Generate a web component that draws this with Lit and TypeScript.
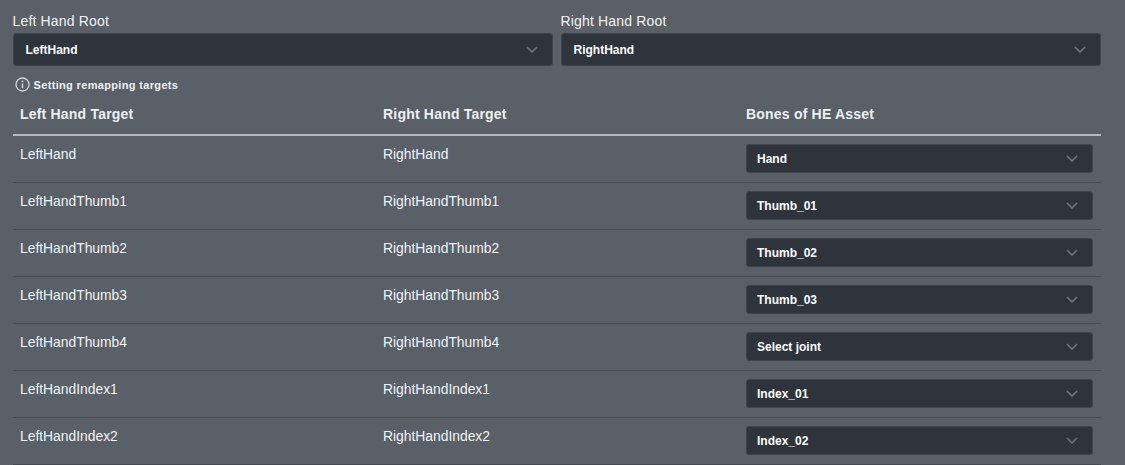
import { LitElement, html, css, svg } from "lit";
import { customElement } from "lit/decorators.js";

const rows: [string, string, string][] = [
  ["LeftHand", "RightHand", "Hand"],
  ["LeftHandThumb1", "RightHandThumb1", "Thumb_01"],
  ["LeftHandThumb2", "RightHandThumb2", "Thumb_02"],
  ["LeftHandThumb3", "RightHandThumb3", "Thumb_03"],
  ["LeftHandThumb4", "RightHandThumb4", "Select joint"],
  ["LeftHandIndex1", "RightHandIndex1", "Index_01"],
  ["LeftHandIndex2", "RightHandIndex2", "Index_02"],
];

const chevron = svg`<path d="M1 1 L6 6 L11 1" fill="none" stroke="#717982" stroke-width="1.5"/>`;

@customElement("app-root")
export class AppRoot extends LitElement {
  static styles = css`
    :host {
      display: block;
      width: 1125px;
      height: 465px;
      overflow: hidden;
      background: #596068;
      color: #fff;
      font-family: "Liberation Sans", Arial, sans-serif;
      box-sizing: border-box;
      padding: 12px 24px 0 12.5px;
    }
    .roots {
      display: grid;
      grid-template-columns: 540px 540px;
      gap: 8px;
    }
    .root-label {
      font-size: 14px;
      line-height: 18px;
      letter-spacing: 0.17px;
      color: #f2f4f5;
      height: 21px;
    }
    .select {
      display: flex;
      align-items: center;
      justify-content: space-between;
      box-sizing: border-box;
      background: #2d343c;
      border: 1px solid #3d444c;
      border-radius: 3px;
      font-size: 12px;
      font-weight: 700;
      color: #fff;
    }
    .select.big {
      height: 33px;
      padding: 0 14px 0 12px;
    }
    .select.small {
      height: 29px;
      width: 347px;
      padding: 0 14px 0 10px;
    }
    .select svg {
      width: 12px;
      height: 7px;
      display: block;
    }
    .hint {
      display: flex;
      align-items: center;
      gap: 4px;
      height: 22px;
      margin-top: 8px;
      padding-left: 2px;
      font-size: 11px;
      font-weight: 700;
      letter-spacing: 0.34px;
      color: #f0f2f3;
    }
    .hint svg {
      width: 15px;
      height: 15px;
      display: block;
      margin-bottom: 2px;
    }
    .row {
      display: grid;
      grid-template-columns: repeat(3, 363px);
      width: 1088.5px;
      box-sizing: border-box;
      padding-left: 7.5px;
    }
    .row.head {
      height: 40px;
      align-items: center;
      border-bottom: 2px solid #b4b9bd;
      font-size: 14px;
      font-weight: 700;
      letter-spacing: 0.2px;
      color: #eef0f1;
      padding-bottom: 3px;
    }
    .row.body {
      height: 47px;
      border-bottom: 1px solid #454c54;
      font-size: 13.85px;
      color: #f2f4f5;
    }
    .row.body .name {
      padding-top: 10px;
      line-height: 16px;
    }
    .cell-select {
      padding-top: 8px;
    }
  `;

  render() {
    return html`
      <div class="roots">
        ${[["Left Hand Root", "LeftHand"], ["Right Hand Root", "RightHand"]].map(
          ([label, value]) => html`
            <div>
              <div class="root-label">${label}</div>
              <div class="select big">
                <span>${value}</span>
                <svg viewBox="0 0 12 7">${chevron}</svg>
              </div>
            </div>
          `
        )}
      </div>
      <div class="hint">
        <svg viewBox="0 0 15 15">
          <circle cx="7.5" cy="7.5" r="6.5" fill="none" stroke="#d5d8da" stroke-width="1.3" />
          <path d="M7.5 6.4 V11.2" stroke="#d5d8da" stroke-width="1.4" fill="none" />
          <circle cx="7.5" cy="4.3" r="0.9" fill="#d5d8da" />
        </svg>
        <span>Setting remapping targets</span>
      </div>
      <div class="row head">
        <span>Left Hand Target</span>
        <span>Right Hand Target</span>
        <span>Bones of HE Asset</span>
      </div>
      ${rows.map(
        ([l, r, b]) => html`
          <div class="row body">
            <div class="name">${l}</div>
            <div class="name">${r}</div>
            <div class="cell-select">
              <div class="select small">
                <span>${b}</span>
                <svg viewBox="0 0 12 7">${chevron}</svg>
              </div>
            </div>
          </div>
        `
      )}
    `;
  }
}
